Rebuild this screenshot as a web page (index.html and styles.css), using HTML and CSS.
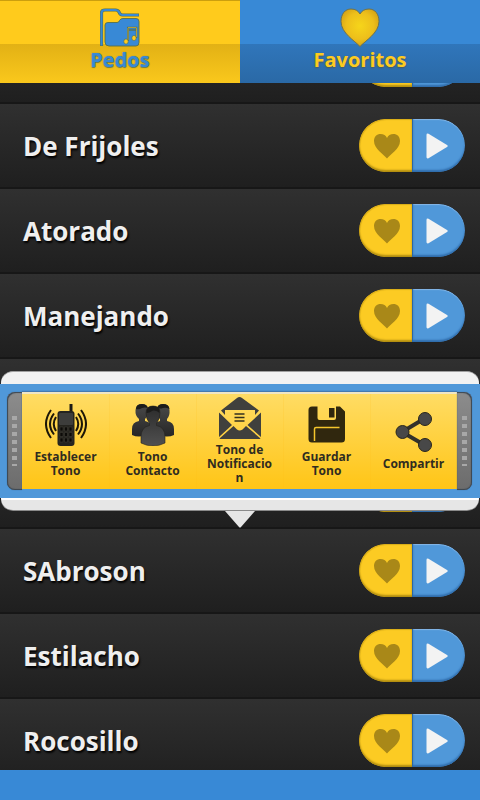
FILE: index.html
```html
<!DOCTYPE html>
<html lang="es">
<head>
    <meta charset="UTF-8">
    <meta name="viewport" content="width=device-width, initial-scale=1">
    <title>Pedos</title>
    <link rel="stylesheet" href="styles.css">
</head>
<body>
    <!-- shared shapes -->
    <svg class="defs" width="0" height="0" aria-hidden="true">
        <defs>
            <linearGradient id="dark" x1="0" y1="0" x2="0" y2="1">
                <stop offset="0" stop-color="#2b2b2b"/>
                <stop offset="1" stop-color="#505050"/>
            </linearGradient>
            <linearGradient id="side" x1="0" y1="0" x2="0" y2="1">
                <stop offset="0" stop-color="#4a4a4a"/>
                <stop offset="1" stop-color="#262626"/>
            </linearGradient>
            <radialGradient id="gold" cx="0.5" cy="0.45" r="0.6">
                <stop offset="0" stop-color="#f6d51a"/>
                <stop offset="0.6" stop-color="#edbf1b"/>
                <stop offset="1" stop-color="#cf9d14"/>
            </radialGradient>
        </defs>
        <symbol id="heart" viewBox="0 0 28 26">
            <path d="M14 25.500C11 21.500 1 16 1 8C1 3.500 4 1 7.500 1C10.500 1 13 2.500 14 5C15 2.500 17.500 1 20.500 1C24 1 27 3.500 27 8C27 16 17 21.500 14 25.500Z"/>
        </symbol>
        <symbol id="play" viewBox="0 0 22 26">
            <path d="M0.500 2Q0.500 0 2.500 0.700L21 12Q22.500 13 21 14L2.500 25.300Q0.500 26 0.500 24Z"/>
        </symbol>
    </svg>

    <nav class="tabs">
        <button type="button" class="tab tab-sounds">
            <svg class="tab-icon" viewBox="0 0 40 40" aria-hidden="true">
                <path d="M1.500 38V5Q1.500 2 5 2H15.500Q18 2 19 4Q20 7 22.500 7H39" fill="none" stroke="#55714f" stroke-width="3.200"/>
                <path d="M1.500 37.500V5Q1.500 2 5 2H15.500Q18 2 19 4Q20 7 22.500 7H38.500" fill="none" stroke="#3889d6" stroke-width="2"/>
                <path d="M5 17Q5 14.500 8 14.500H17Q19 14.500 19.500 12.500Q20.500 10.500 23 10.500H36Q39 10.500 39 13.500V34.500Q39 38 36 38H9Q5 38 5 34Z" fill="#3889d6" stroke="#55714f" stroke-width="0.900"/>
                <path d="M28 33V19.500H36.500V30" fill="none" stroke="#55714f" stroke-width="1.600"/>
                <path d="M28 22H36.500" stroke="#55714f" stroke-width="1.400"/>
                <path d="M28 19.500H36.500M28 20V32M36.500 20V29" fill="none" stroke="#cda92c" stroke-width="0.800"/>
                <ellipse cx="26" cy="33.500" rx="2.200" ry="2.600" fill="#ffcb1c" stroke="#55714f" stroke-width="0.600"/>
                <ellipse cx="34" cy="30" rx="2.200" ry="2.600" fill="#ffcb1c" stroke="#55714f" stroke-width="0.600"/>
            </svg>
            <span>Pedos</span>
        </button>
        <button type="button" class="tab tab-favorites">
            <svg class="tab-icon" viewBox="0 0 40 40" aria-hidden="true">
                <path d="M20 38.500C15 33 1 25 1 13.500C1 6 5 1 11 1C15.500 1 18.500 3 20 6C21.500 3 24.500 1 29 1C35 1 39 6 39 13.500C39 25 25 33 20 38.500Z" fill="url(#gold)" stroke="#6d7250" stroke-width="1"/>
            </svg>
            <span>Favoritos</span>
        </button>
    </nav>

    <main class="list">
        <div class="row">
            <div class="pill">
                <button type="button" class="fav" aria-label="Favorito"><svg aria-hidden="true"><use href="#heart"/></svg></button>
                <button type="button" class="play" aria-label="Reproducir"><svg aria-hidden="true"><use href="#play"/></svg></button>
            </div>
        </div>
        <div class="row">
            <span class="name">De Frijoles</span>
            <div class="pill">
                <button type="button" class="fav" aria-label="Favorito"><svg aria-hidden="true"><use href="#heart"/></svg></button>
                <button type="button" class="play" aria-label="Reproducir"><svg aria-hidden="true"><use href="#play"/></svg></button>
            </div>
        </div>
        <div class="row">
            <span class="name">Atorado</span>
            <div class="pill">
                <button type="button" class="fav" aria-label="Favorito"><svg aria-hidden="true"><use href="#heart"/></svg></button>
                <button type="button" class="play" aria-label="Reproducir"><svg aria-hidden="true"><use href="#play"/></svg></button>
            </div>
        </div>
        <div class="row">
            <span class="name">Manejando</span>
            <div class="pill">
                <button type="button" class="fav" aria-label="Favorito"><svg aria-hidden="true"><use href="#heart"/></svg></button>
                <button type="button" class="play" aria-label="Reproducir"><svg aria-hidden="true"><use href="#play"/></svg></button>
            </div>
        </div>
        <div class="row">
            <div class="pill">
                <button type="button" class="fav" aria-label="Favorito"><svg aria-hidden="true"><use href="#heart"/></svg></button>
                <button type="button" class="play" aria-label="Reproducir"><svg aria-hidden="true"><use href="#play"/></svg></button>
            </div>
        </div>
        <div class="row">
            <div class="pill">
                <button type="button" class="fav" aria-label="Favorito"><svg aria-hidden="true"><use href="#heart"/></svg></button>
                <button type="button" class="play" aria-label="Reproducir"><svg aria-hidden="true"><use href="#play"/></svg></button>
            </div>
        </div>
        <div class="row">
            <span class="name">SAbroson</span>
            <div class="pill">
                <button type="button" class="fav" aria-label="Favorito"><svg aria-hidden="true"><use href="#heart"/></svg></button>
                <button type="button" class="play" aria-label="Reproducir"><svg aria-hidden="true"><use href="#play"/></svg></button>
            </div>

            <!-- quick actions, opens above the row -->
            <div class="popup">
                <div class="popup-top"></div>
                <div class="popup-band">
                    <div class="grip"></div>
                    <div class="actions">
                        <button type="button" class="action">
                            <svg viewBox="0 0 42 42" aria-hidden="true">
                                <path d="M24.500 0H27.500V8H24.500Z" fill="#1c1a14"/>
                                <rect x="12.500" y="7" width="17" height="35" rx="3" fill="#25241f"/>
                                <rect x="14" y="9" width="14" height="12" rx="1" fill="#3d3d3b"/>
                                <path d="M15 23H18V27H15ZM19.500 23H22.500V27H19.500ZM24 23H27V27H24ZM15 28.500H18V32.500H15ZM19.500 28.500H22.500V32.500H19.500ZM24 28.500H27V32.500H24ZM15 34H18V38H15ZM19.500 34H22.500V38H19.500ZM24 34H27V38H24Z" fill="#0c0b08" stroke="#45433b" stroke-width="0.500"/>
                                <path d="M6 6Q-4 20 6 34M9 9.500Q1 20 9 30.500M11 13Q6.500 20 11 27M36 6Q46 20 36 34M33 9.500Q41 20 33 30.500M31 13Q35.500 20 31 27" fill="none" stroke="#1c1608" stroke-width="2"/>
                            </svg>
                            <span>Establecer Tono</span>
                        </button>
                        <button type="button" class="action">
                            <svg viewBox="0 0 42 42" aria-hidden="true">
                                <g fill="url(#side)">
                                    <path d="M0 31V25Q0 18 7 17V15Q3 12 3.500 6Q4 0 10 0Q16 0 16 7Q16 12 13 15V17Q20 18 20 25V29Q8 35 0 31Z"/>
                                    <path d="M42 31V25Q42 18 35 17V15Q38 12 37.500 6Q37 0 31 0Q25 0 25 7Q25 12 28 15V17Q21 18 21 25V29Q34 35 42 31Z"/>
                                </g>
                                <path d="M9 39V33Q9 23 17.500 21.500V19Q14 15 14 9Q14 2 21 2Q28 2 28 9Q28 15 24.500 19V21.500Q33 23 33 33V39Q21 45 9 39Z" fill="url(#dark)" stroke="#25241f" stroke-width="0.600"/>
                                <path d="M14.500 9Q14 2 21 2Q28 2 27.500 9Q25 6 21 6.500Q17 9 14.500 9Z" fill="#1c1c1b"/>
                                <path d="M4 5Q4 0 10 0Q15 0 16 4Q13 3 10 4Q7 6 4 5ZM25 4Q26 0 31 0Q37 0 37.500 5Q34 3 31 4Q28 5 25 4Z" fill="#1c1c1b"/>
                            </svg>
                            <span>Tono Contacto</span>
                        </button>
                        <button type="button" class="action">
                            <svg viewBox="0 0 42 42" aria-hidden="true">
                                <path d="M2 13.500L18 1Q20.500 -1 23 1L40 13.500L36 18V13H6V18Z" fill="#40403d"/>
                                <path d="M0 15.500L13 28L0 40ZM42 15.500L28.500 28L42 40Z" fill="#40403d"/>
                                <path d="M0.500 41.500L14.500 29L18 32.500Q20.500 34.500 23.500 32.500L27 29L41.500 41.500Q41 42 40 42H2Q1 42 0.500 41.500Z" fill="#40403d"/>
                                <path d="M15.500 17H25.500M15.500 20.500H25.500M15.500 24H25.500" stroke="#33301f" stroke-width="1.400"/>
                            </svg>
                            <span>Tono de Notificacion</span>
                        </button>
                        <button type="button" class="action">
                            <svg viewBox="0 0 42 42" aria-hidden="true">
                                <path d="M6 2.500H11.500V14Q11.500 16 13.500 16H28Q30 16 30 14V2.500H34L39 7.500V35Q39 38.500 35.500 38.500H6Q2.500 38.500 2.500 35V6Q2.500 2.500 6 2.500Z" fill="#30270e"/>
                                <path d="M23 4H28.500V13.500H23Z" fill="#30270e"/>
                                <path d="M8.500 37V25Q8.500 23.500 10 23.500H33.500" fill="none" stroke="#f4c52c" stroke-width="1.500"/>
                            </svg>
                            <span>Guardar Tono</span>
                        </button>
                        <button type="button" class="action">
                            <svg viewBox="0 0 42 42" aria-hidden="true">
                                <path d="M31.500 7.500L9 21L31.500 34" fill="none" stroke="#33312b" stroke-width="4"/>
                                <g fill="#484848" stroke="#29261c" stroke-width="1">
                                    <circle cx="32" cy="8" r="6.500"/>
                                    <circle cx="9.500" cy="21" r="6.500"/>
                                    <circle cx="32" cy="34" r="6.500"/>
                                </g>
                            </svg>
                            <span>Compartir</span>
                        </button>
                    </div>
                    <div class="grip grip-right"></div>
                </div>
                <div class="popup-bottom"></div>
                <svg class="arrow" viewBox="0 0 30 17" aria-hidden="true">
                    <path d="M0 0H30L16 16Q15 17 14 16Z" fill="#e6e6e6"/>
                </svg>
            </div>
        </div>
        <div class="row">
            <span class="name">Estilacho</span>
            <div class="pill">
                <button type="button" class="fav" aria-label="Favorito"><svg aria-hidden="true"><use href="#heart"/></svg></button>
                <button type="button" class="play" aria-label="Reproducir"><svg aria-hidden="true"><use href="#play"/></svg></button>
            </div>
        </div>
        <div class="row">
            <span class="name">Rocosillo</span>
            <div class="pill">
                <button type="button" class="fav" aria-label="Favorito"><svg aria-hidden="true"><use href="#heart"/></svg></button>
                <button type="button" class="play" aria-label="Reproducir"><svg aria-hidden="true"><use href="#play"/></svg></button>
            </div>
        </div>
    </main>

    <footer class="bottom-bar"></footer>
</body>
</html>
```

FILE: styles.css
```css
* {
    margin: 0;
    padding: 0;
    box-sizing: border-box;
}

body {
    display: flex;
    flex-direction: column;
    height: 100vh;
    overflow: hidden;
    background: #202020;
    font-family: "Open Sans", "Noto Sans", sans-serif;
    font-weight: 700;
}

button {
    border: none;
    font: inherit;
    cursor: pointer;
}

svg {
    display: block;
}

.defs {
    position: absolute;
}

/* tabs */
.tabs {
    display: flex;
    flex: none;
    height: 83px;
}

.tab {
    flex: 1;
    display: flex;
    flex-direction: column;
    align-items: center;
    padding-top: 8px;
    font-size: 20px;
    line-height: 24px;
}

.tab-icon {
    width: 40px;
    height: 40px;
}

.tab-sounds {
    background: linear-gradient(#cc9f0e 1px, #ffcb1c 1px, #ffcb1c 44px, #e2b115 44px, #fac81c);
    color: #3889d6;
    text-shadow: 0 0 1px #55714f, 0 1px 1px #6e7d48;
}

.tab-favorites {
    background: linear-gradient(#3889d6 44px, #3076bb 44px, #2a69a6);
    color: #fccb20;
    text-shadow: 0 1px 2px #4d5a52;
}

/* sound list, scrolled part way into the first row */
.list {
    flex: 1;
    min-height: 0;
    overflow: hidden;
}

.row {
    position: relative;
    display: flex;
    align-items: center;
    height: 85px;
    padding: 0 15px 0 23px;
    border-bottom: 2px solid #171717;
    background: linear-gradient(#303030, #1f1f1f);
}

.row:first-child {
    margin-top: -64px;
}

.name {
    color: #efefef;
    font-size: 26px;
    line-height: 36px;
    text-shadow: 1px 2px 2px #000;
}

.pill {
    display: flex;
    width: 106px;
    height: 53px;
    margin-left: auto;
    border-radius: 27px;
    overflow: hidden;
}

.fav,
.play {
    flex: 1;
    display: flex;
    align-items: center;
    justify-content: center;
}

.fav {
    border-radius: 27px 0 0 27px;
    background: #fccb23;
    box-shadow: inset 0 -2px 2px #b08c10, inset 1px 1px 1px #d8ac18;
}

.fav svg {
    width: 28px;
    height: 26px;
    margin-left: 4px;
    fill: #a98818;
}

.play {
    border-left: 1px solid #2a67a5;
    border-radius: 0 27px 27px 0;
    background: #5098d9;
    box-shadow: inset 0 -2px 2px #2f6cab, inset 0 1px 1px #85b6e6;
}

.play svg {
    width: 22px;
    height: 26px;
    margin-right: 4px;
    fill: #f3f3f3;
}

/* quick actions */
.popup {
    position: absolute;
    z-index: 1;
    bottom: 100%;
    left: 0;
    right: 0;
    margin-bottom: 1px;
}

.popup-top {
    height: 13px;
    margin: 0 1px;
    border-top: 1px solid #a0a0a0;
    border-radius: 12px 12px 0 0;
    background: #f2f2f2;
}

.popup-band {
    display: flex;
    height: 114px;
    padding: 8px 8px 8px 7px;
    background: #5098d9;
}

.popup-bottom {
    height: 13px;
    margin: 0 1px;
    border-bottom: 1px solid #8a8a8a;
    border-radius: 0 0 12px 12px;
    background: linear-gradient(#fff 2px, #e6e6e6 2px);
}

.arrow {
    width: 30px;
    height: 17px;
    margin: 0 auto;
}

.grip {
    display: flex;
    align-items: center;
    justify-content: center;
    width: 15px;
    border-radius: 8px 0 0 8px;
    background: linear-gradient(#8c8c8c, #6c6c6c);
    box-shadow: inset 1px 1px 1px #3b4652, inset 0 -1px 1px #3b4652, 0 0 1px #2c5480;
}

.grip-right {
    border-radius: 0 8px 8px 0;
    box-shadow: inset -1px 1px 1px #3b4652, inset 0 -1px 1px #3b4652, 0 0 1px #2c5480;
}

.grip::before {
    content: "";
    width: 5px;
    height: 50px;
    background:
        linear-gradient(#a8a8a8, #a8a8a8) 0 0 / 3px 8px,
        linear-gradient(#5c5c5c, #5c5c5c) 0 0 / 5px 8px;
    -webkit-mask: repeating-linear-gradient(#000 0, #000 4px, transparent 4px, transparent 8px);
    mask: repeating-linear-gradient(#000 0, #000 4px, transparent 4px, transparent 8px);
}

.actions {
    flex: 1;
    display: flex;
    margin-bottom: 1px;
    padding-bottom: 1px;
    border-top: 2px solid #f0e6c4;
    background: linear-gradient(#ffdc64, #ffc516);
    box-shadow: 0 -1px 1px #4579ae;
}

.action {
    flex: 1;
    min-width: 0;
    display: flex;
    flex-direction: column;
    align-items: center;
    justify-content: center;
    gap: 4px;
    background: none;
    color: #302c20;
    font-size: 12px;
    line-height: 14px;
    text-align: center;
}

.action + .action {
    box-shadow: inset 1px 0 0 rgba(255, 190, 20, 0.15);
}

.action svg {
    width: 42px;
    height: 42px;
}

.action span {
    width: 66px;
    overflow-wrap: break-word;
}

/* bottom bar */
.bottom-bar {
    flex: none;
    height: 30px;
    background: #3889d6;
}
```
